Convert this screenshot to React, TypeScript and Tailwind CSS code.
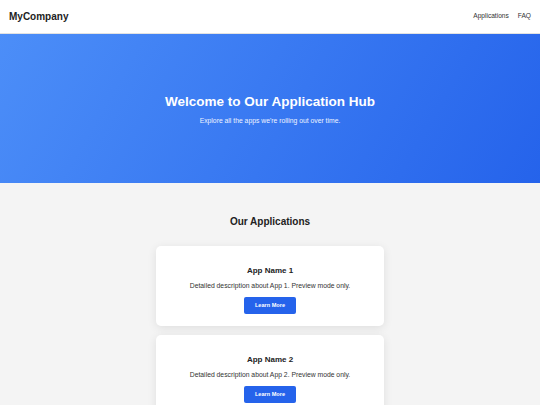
const apps = [
  { id: 1, name: "App Name 1" },
  { id: 2, name: "App Name 2" },
];

function Header() {
  return (
    <header className="flex h-[34px] items-center justify-between border-b border-[#e2e2e2] bg-white px-[9px]">
      <span className="text-[10px] font-bold leading-none text-[#222]">
        MyCompany
      </span>
      <nav className="flex gap-[9px] text-[6.6px] leading-none text-[#333]">
        <a href="#apps">Applications</a>
        <a href="#faq">FAQ</a>
      </nav>
    </header>
  );
}

function AppCard({ id, name }: { id: number; name: string }) {
  return (
    <div className="flex w-[228px] flex-col items-center rounded-[5px] bg-white pt-[20px] pb-[12px] shadow-[0_2px_10px_rgba(0,0,0,0.09)]">
      <h3 className="text-[8px] font-bold leading-[10px] text-[#222]">
        {name}
      </h3>
      <p className="mt-[6px] text-[6.8px] leading-[8px] text-[#333]">
        Detailed description about App {id}. Preview mode only.
      </p>
      <button className="mt-[7px] h-[17px] w-[52px] rounded-[2px] bg-[#2563eb] text-[5.6px] font-bold leading-none text-white">
        Learn More
      </button>
    </div>
  );
}

export default function App() {
  return (
    <div className="min-h-screen bg-[#f4f4f4] font-['Liberation_Sans',Arial,sans-serif]">
      <Header />
      <section className="flex h-[149px] flex-col items-center justify-center bg-[linear-gradient(120deg,#4c8ef8_0%,#2563eb_100%)] pt-[2px] text-white">
        <h1 className="text-[13.5px] font-bold leading-[16px]">
          Welcome to Our Application Hub
        </h1>
        <p className="mt-[7px] text-[6.8px] leading-[8px] text-[#eef3ff]">
          Explore all the apps we're rolling out over time.
        </p>
      </section>
      <section id="apps" className="flex flex-col items-center pt-[33px]">
        <h2 className="text-[10px] font-bold leading-[12px] text-[#222]">
          Our Applications
        </h2>
        <div className="mt-[18px] flex flex-col gap-[9px]">
          {apps.map((app) => (
            <AppCard key={app.id} id={app.id} name={app.name} />
          ))}
        </div>
      </section>
    </div>
  );
}
